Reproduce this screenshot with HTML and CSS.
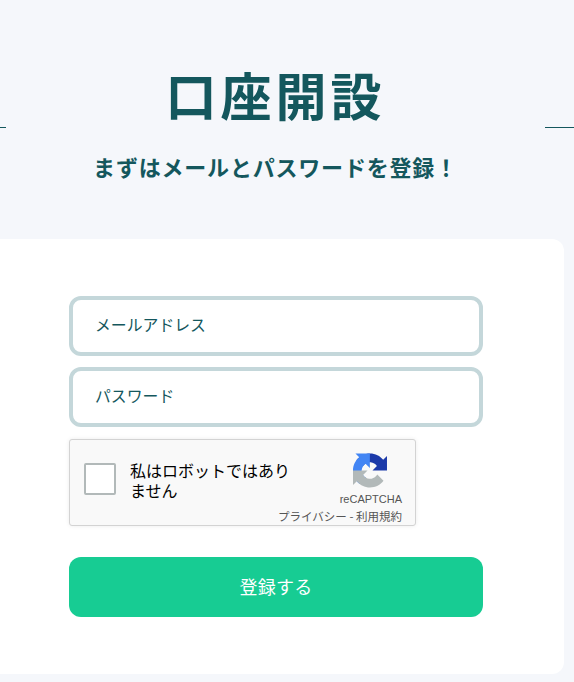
FILE: index.html
```html
<!DOCTYPE html>
<html lang="ja">

<head>
    <meta charset="utf-8">
    <title>口座開設</title>
    <link rel="stylesheet" href="styles.css">
</head>

<body>
    <div class="page_header">
        <div class="title_row">
            <span class="title_line"></span>
            <h1 class="page_title">口座開設</h1>
            <span class="title_line"></span>
        </div>
        <p class="page_lead">まずはメールとパスワードを登録！</p>
    </div>

    <div class="form_card">
        <div class="text_input">メールアドレス</div>
        <div class="text_input">パスワード</div>
        <div class="captcha">
            <span class="captcha_check"></span>
            <span class="captcha_label">私はロボットではありません</span>
            <div class="captcha_brand">
                <svg class="captcha_logo" viewBox="0 0 64 64">
                    <path d="M64 31.955l-.033-1.37V4.687l-7.16 7.16C50.948 4.674 42.033.093 32.05.093c-10.4 0-19.622 4.96-25.458 12.64l11.736 11.86a15.55 15.55 0 0 1 4.754-5.334c2.05-1.6 4.952-2.906 8.968-2.906.485 0 .86.057 1.135.163 4.976.393 9.288 3.14 11.828 7.124l-8.307 8.307c10.522-.04 22.4-.066 27.295.004" fill="#1c3aa9" />
                    <path d="M31.862.094l-1.37.033H4.594l7.16 7.16C4.58 13.147 0 22.06 0 32.046c0 10.4 4.96 19.622 12.64 25.458l11.86-11.736a15.55 15.55 0 0 1-5.334-4.754c-1.6-2.05-2.906-4.952-2.906-8.968 0-.485.057-.86.163-1.135.393-4.976 3.14-9.288 7.124-11.828l8.307 8.307c-.04-10.522-.066-22.4.004-27.295" fill="#4285f4" />
                    <path d="M.001 32.045l.033 1.37v25.898l7.16-7.16c5.86 7.173 14.774 11.754 24.76 11.754 10.4 0 19.622-4.96 25.458-12.64l-11.736-11.86a15.55 15.55 0 0 1-4.754 5.334c-2.05 1.6-4.952 2.906-8.968 2.906-.485 0-.86-.057-1.135-.163-4.976-.393-9.288-3.14-11.828-7.124l8.307-8.307c-10.522.04-22.4.066-27.295-.004" fill="#b2b9b9" />
                </svg>
                <div class="captcha_name">reCAPTCHA</div>
                <div class="captcha_links">プライバシー - 利用規約</div>
            </div>
        </div>
        <button class="button_submit">登録する</button>
    </div>
</body>

</html>
```

FILE: styles.css
```css
html {
    overflow: hidden;
}

body {
    margin: 0;
    height: 682px;
    overflow: hidden;
    background-color: #f5f7fb;
    color: #14575d;
    font-family: "Noto Sans CJK JP", "Noto Sans", sans-serif;
}

/* Heading */

.page_header {
    height: 239px;
    padding-top: 66px;
    box-sizing: border-box;
}

.title_row {
    display: flex;
    align-items: flex-end;
    margin-left: -23px;
    height: 62px;
}

.title_line {
    width: 29px;
    height: 1px;
    background-color: #14575d;
}

.page_title {
    flex: 1;
    align-self: flex-start;
    margin: 0;
    font-size: 51px;
    line-height: 56px;
    font-weight: 700;
    letter-spacing: 4px;
    text-align: center;
}

.page_lead {
    margin: 23px 0 0 -23px;
    font-size: 22px;
    line-height: 30px;
    font-weight: 700;
    letter-spacing: 0.8px;
    text-align: center;
}

/* Card */

.form_card {
    display: flex;
    flex-direction: column;
    align-items: flex-start;
    width: 584px;
    height: 435px;
    box-sizing: border-box;
    margin-left: -20px;
    padding: 57px 0 0 89px;
    background-color: #fff;
    border-radius: 12px;
}

.text_input {
    width: 414px;
    height: 60px;
    box-sizing: border-box;
    margin-bottom: 11px;
    padding-left: 22px;
    border: 4px solid #c4d7da;
    border-radius: 12px;
    font-size: 15.85px;
    line-height: 50px;
}

/* reCAPTCHA box */

.captcha {
    display: flex;
    width: 347px;
    height: 87px;
    box-sizing: border-box;
    margin-top: 1px;
    background-color: #f9f9f9;
    border: 1px solid #d3d3d3;
    border-radius: 3px;
    box-shadow: 0 0 4px rgba(0, 0, 0, 0.08);
    color: #000;
}

.captcha_check {
    flex: none;
    width: 32px;
    height: 32px;
    box-sizing: border-box;
    margin: 23px 14px 0 14px;
    background-color: #fff;
    border: 2px solid #b2b9b9;
    border-radius: 2px;
}

.captcha_label {
    flex: none;
    width: 166px;
    padding-top: 20px;
    font-size: 16px;
    line-height: 20px;
}

.captcha_brand {
    display: flex;
    flex-direction: column;
    align-items: flex-end;
    flex: 1;
    min-width: 0;
    padding-right: 13px;
    color: #555;
}

.captcha_logo {
    flex: none;
    width: 34px;
    height: 35px;
    margin: 13px 15px 0 0;
}

.captcha_name {
    margin-top: 4px;
    font-family: "Liberation Sans", sans-serif;
    font-size: 11px;
    line-height: 14px;
}

.captcha_links {
    margin-top: 3px;
    font-size: 11.5px;
    line-height: 15px;
    white-space: nowrap;
}

/* Submit */

.button_submit {
    width: 414px;
    height: 60px;
    margin-top: 31px;
    padding-bottom: 3px;
    background-color: #17cc93;
    border: none;
    border-radius: 12px;
    color: #fff;
    font-family: "Noto Sans CJK JP", "Noto Sans", sans-serif;
    font-size: 18px;
    letter-spacing: 0.2px;
    cursor: pointer;
}
```
